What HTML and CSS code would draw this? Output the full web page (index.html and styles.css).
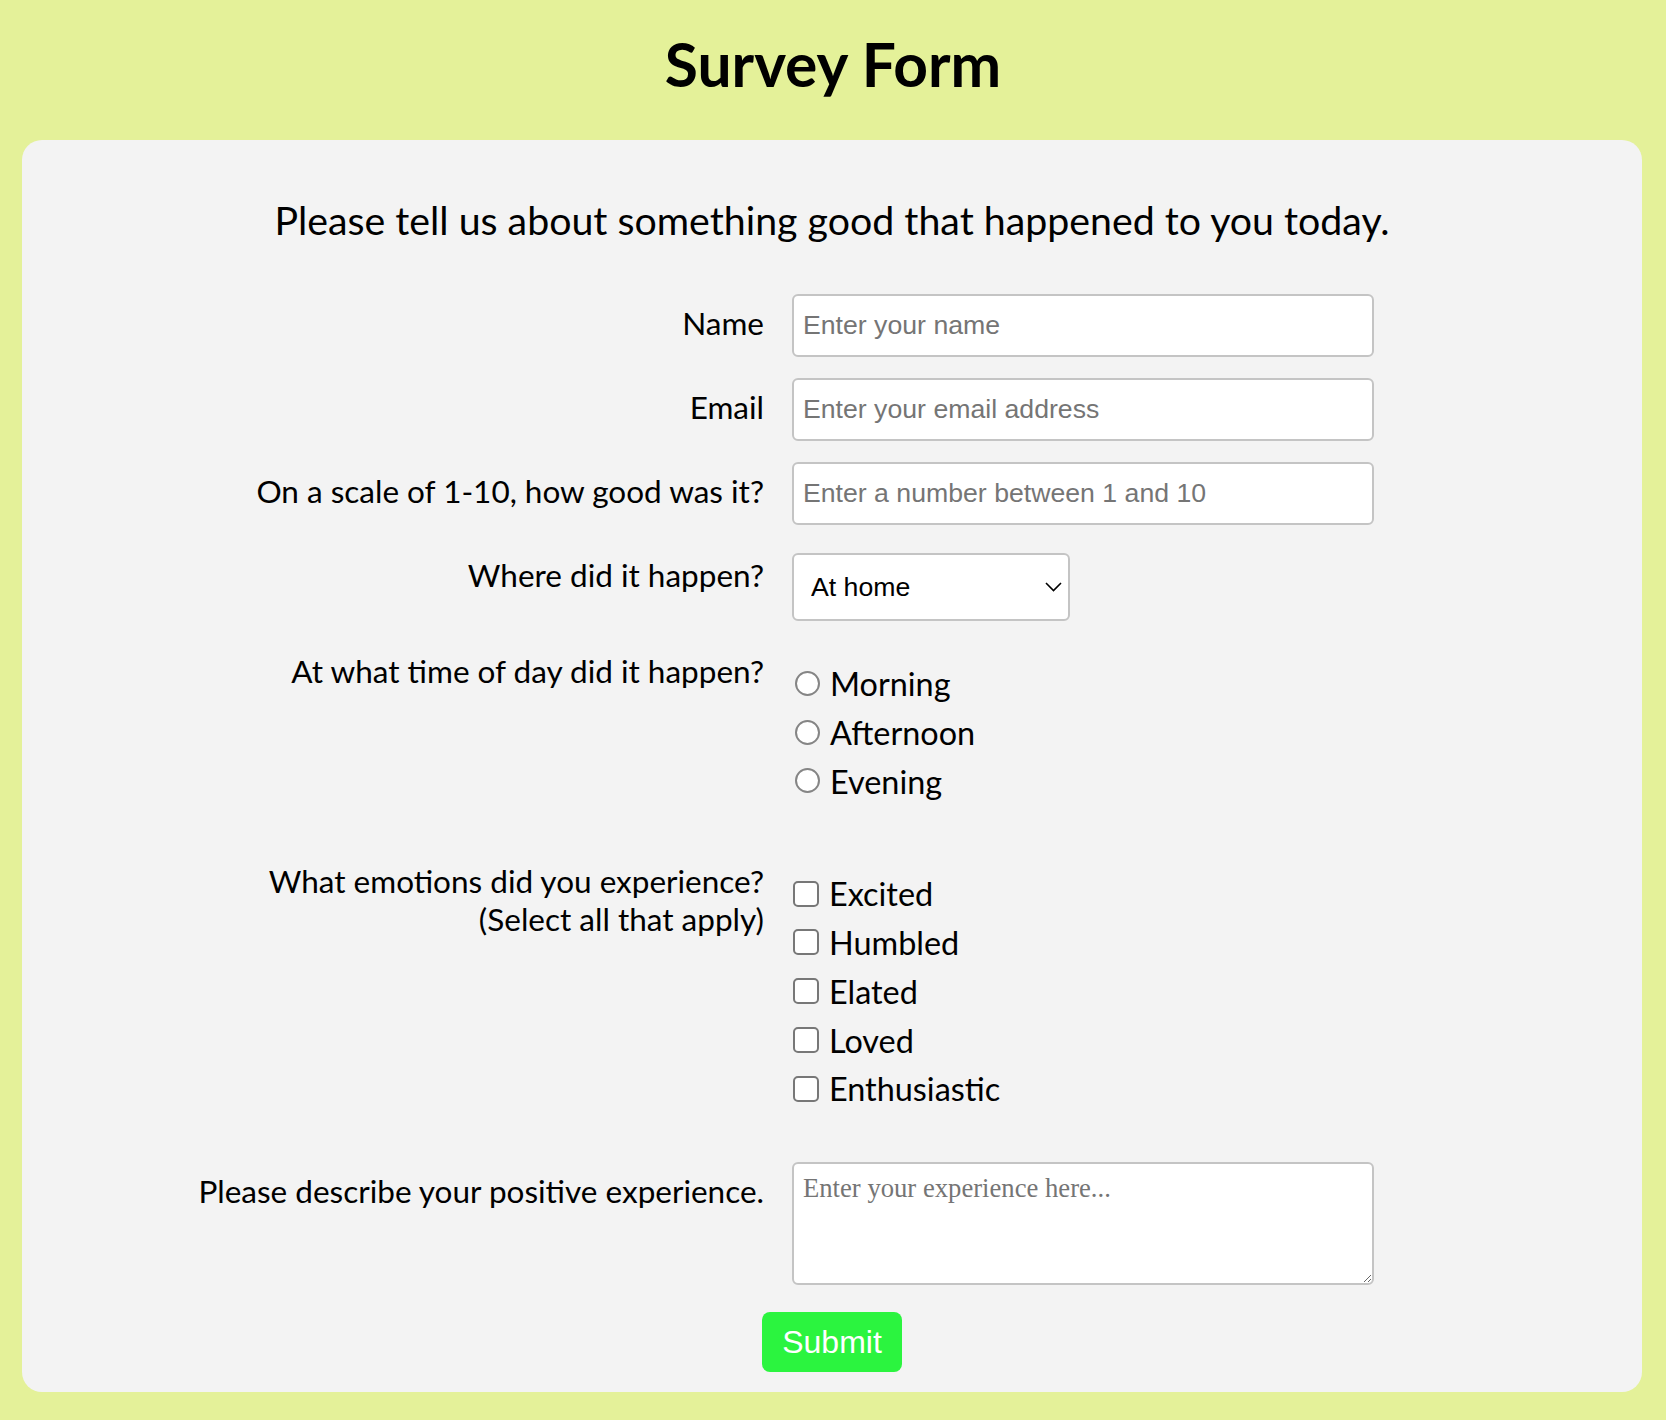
FILE: index.html
```html
<!DOCTYPE html>
<html lang="en">
<head>
<meta charset="utf-8">
<title>Survey Form</title>
<link rel="stylesheet" href="styles.css">
</head>
<body>
<h1 class="title">Survey Form</h1>
<main class="card">
  <p class="intro">Please tell us about something good that happened to you today.</p>
  <form class="form">
    <div class="fields">
      <label class="lbl" for="name">Name</label>
      <input class="text" id="name" type="text" placeholder="Enter your name">

      <label class="lbl" for="email">Email</label>
      <input class="text" id="email" type="email" placeholder="Enter your email address">

      <label class="lbl" for="number">On a scale of 1-10, how good was it?</label>
      <input class="text" id="number" type="number" placeholder="Enter a number between 1 and 10">

      <label class="lbl" for="where">Where did it happen?</label>
      <div class="select-cell">
        <select class="select" id="where">
          <option>At home</option>
          <option>At work</option>
          <option>At school</option>
          <option>Somewhere else</option>
        </select>
      </div>

      <div class="lbl">At what time of day did it happen?</div>
      <div class="options options-radio">
        <label class="opt"><input class="radio" type="radio" name="time" value="morning"><span>Morning</span></label>
        <label class="opt"><input class="radio" type="radio" name="time" value="afternoon"><span>Afternoon</span></label>
        <label class="opt"><input class="radio" type="radio" name="time" value="evening"><span>Evening</span></label>
      </div>

      <div class="lbl">What emotions did you experience?<br>(Select all that apply)</div>
      <div class="options">
        <label class="opt"><input class="check" type="checkbox" value="excited"><span>Excited</span></label>
        <label class="opt"><input class="check" type="checkbox" value="humbled"><span>Humbled</span></label>
        <label class="opt"><input class="check" type="checkbox" value="elated"><span>Elated</span></label>
        <label class="opt"><input class="check" type="checkbox" value="loved"><span>Loved</span></label>
        <label class="opt"><input class="check" type="checkbox" value="enthusiastic"><span>Enthusiastic</span></label>
      </div>

      <label class="lbl" for="experience">Please describe your positive experience.</label>
      <textarea class="area" id="experience" placeholder="Enter your experience here..."></textarea>
    </div>
    <div class="actions">
      <button class="submit" type="submit">Submit</button>
    </div>
  </form>
</main>
</body>
</html>
```

FILE: styles.css
```css
html, body {
  margin: 0;
  padding: 0;
}

body {
  background: #e4f199;
  font-family: "Lato", "Noto Sans", sans-serif;
  color: #000;
}

.title {
  margin: 28px 0 40px;
  font-size: 60.5px;
  line-height: 72px;
  font-weight: 700;
  text-align: center;
}

.card {
  margin: 0 24px 27px 22px;
  padding: 56px 0 20px;
  background: #f3f3f3;
  border-radius: 20px;
}

.intro {
  margin: 0 0 50px;
  font-size: 39.3px;
  line-height: 48px;
  text-align: center;
}

.fields {
  display: grid;
  grid-template-columns: 1fr 582px;
  column-gap: 28px;
  row-gap: 21px;
  align-items: start;
  padding-right: 268px;
}

.lbl {
  margin-top: 10px;
  font-size: 31.5px;
  line-height: 38px;
  text-align: right;
}

.text {
  box-sizing: border-box;
  width: 582px;
  height: 63px;
  margin: 0;
  padding: 0 9px;
  border: 2px solid #c4c4c4;
  border-radius: 6px;
  background: #fff;
  font-family: "Liberation Sans", Arial, sans-serif;
  font-size: 26.67px;
  color: #000;
  outline: none;
}

.text::placeholder,
.area::placeholder {
  color: #757575;
}

.text::-webkit-outer-spin-button,
.text::-webkit-inner-spin-button {
  -webkit-appearance: none;
  margin: 0;
}

.select-cell {
  padding-top: 7px;
}

.select {
  -webkit-appearance: none;
  appearance: none;
  box-sizing: border-box;
  width: 278px;
  height: 68px;
  margin: 0;
  padding: 0 0 0 17px;
  border: 2px solid #c4c4c4;
  border-radius: 6px;
  background-color: #fff;
  background-image: url("data:image/svg+xml;utf8,<svg xmlns='http://www.w3.org/2000/svg' width='17' height='10' viewBox='0 0 17 10'><polyline points='1,1 8.5,8.5 16,1' fill='none' stroke='black' stroke-width='1.6'/></svg>");
  background-repeat: no-repeat;
  background-position: right 6px center;
  font-family: "Liberation Sans", Arial, sans-serif;
  font-size: 26.67px;
  color: #000;
  outline: none;
}

.options {
  display: flex;
  flex-direction: column;
  padding: 18px 0 27px;
}

.options-radio {
  padding-bottom: 25px;
}

.opt {
  display: flex;
  align-items: center;
  font-size: 32.4px;
  line-height: 48.75px;
}

.radio {
  -webkit-appearance: none;
  appearance: none;
  box-sizing: border-box;
  width: 25px;
  height: 25px;
  margin: -2px 10px 0 3px;
  border: 2px solid #858585;
  border-radius: 50%;
  background: #fff;
}

.check {
  -webkit-appearance: none;
  appearance: none;
  box-sizing: border-box;
  width: 26px;
  height: 26px;
  margin: -2px 10px 0 1px;
  border: 2px solid #777;
  border-radius: 5px;
  background: #fff;
}

.area {
  box-sizing: border-box;
  display: block;
  width: 582px;
  height: 123px;
  margin: 0;
  padding: 9px;
  border: 2px solid #c4c4c4;
  border-radius: 6px;
  background: #fff;
  font-family: "Liberation Serif", "Times New Roman", serif;
  font-size: 26.67px;
  color: #000;
  outline: none;
}

.actions {
  display: flex;
  justify-content: center;
  margin-top: 27px;
}

.submit {
  height: 60px;
  margin: 0;
  padding: 0 20px;
  border: none;
  border-radius: 8px;
  background: #2bf43f;
  color: #fff;
  font-family: "Liberation Sans", Arial, sans-serif;
  font-size: 32px;
}
```
